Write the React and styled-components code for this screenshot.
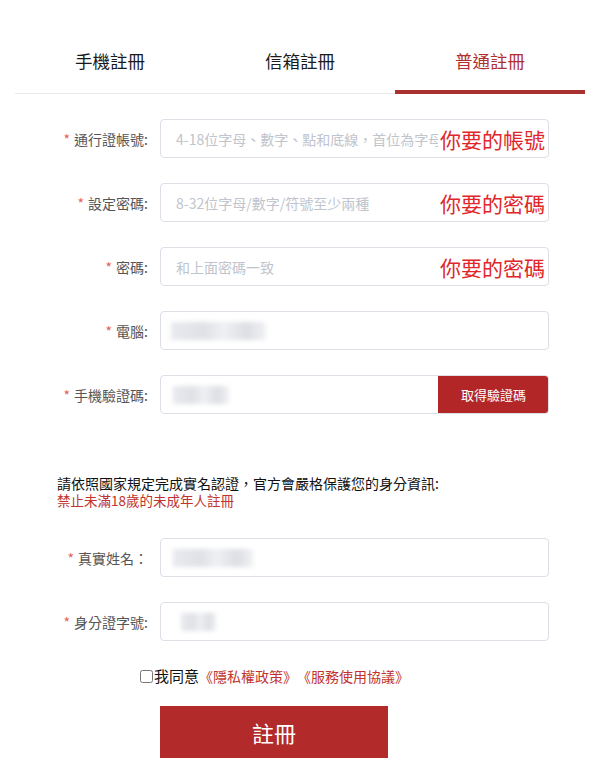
import React from "react";
import styled, { createGlobalStyle } from "styled-components";

const Global = createGlobalStyle`
  html, body { margin: 0; padding: 0; background: #fff; }
  body { font-family: "Noto Sans CJK TC", "Noto Sans", sans-serif; color: #333; }
  * { box-sizing: border-box; }
`;

const Page = styled.div`
  width: 597px;
  padding-bottom: 26px;
`;

const Tabs = styled.div`
  display: flex;
  margin: 0 12px 0 15px;
  border-bottom: 1px solid #e9e9e9;
`;

const Tab = styled.div`
  flex: 1;
  height: 94px;
  padding-top: 32px;
  padding-bottom: 1px;
  margin-bottom: -1px;
  display: flex;
  align-items: center;
  justify-content: center;
  font-size: 17.5px;
  line-height: 22px;
  color: ${(p) => (p.$active ? "#b0302f" : "#1a1a1a")};
  border-bottom: 4px solid ${(p) => (p.$active ? "#a93130" : "transparent")};
`;

const Form = styled.div`
  display: flex;
  flex-direction: column;
  gap: 25px;
  padding-top: 25px;
`;

const Row = styled.div`
  display: flex;
  align-items: center;
  gap: 12px;
`;

const Label = styled.label`
  width: 148px;
  text-align: right;
  font-size: 14px;
  line-height: 20px;
  color: #555;
  white-space: nowrap;
  &::before {
    content: "*";
    color: #e86060;
    margin-right: 4px;
  }
`;

const Field = styled.div`
  position: relative;
  width: 389px;
  height: 39px;
  border: 1px solid #dcdfe6;
  border-radius: 4px;
  display: flex;
  align-items: center;
  overflow: hidden;
`;

const Input = styled.input`
  flex: 1;
  min-width: 0;
  height: 100%;
  border: none;
  outline: none;
  padding: 0 15px;
  font-family: inherit;
  font-size: 14px;
  color: #606266;
  background: transparent;
  &::placeholder { color: #c0c4cc; }
`;

const Note = styled.span`
  position: absolute;
  right: 3px;
  top: 50%;
  transform: translateY(-50%);
  font-size: 21px;
  line-height: 28px;
  color: #e0262a;
  background: #fff;
  padding-left: 2px;
`;

const Blur = styled.span`
  position: absolute;
  left: ${(p) => p.$left}px;
  top: 10px;
  width: ${(p) => p.$w}px;
  height: 18px;
  background: linear-gradient(90deg, #e9eaee 0%, #dfe1e6 35%, #eef0f3 55%, #dcdee3 80%, #f1f2f4 100%);
  filter: blur(2px);
  pointer-events: none;
`;

const CodeButton = styled.button`
  width: 111px;
  height: 39px;
  margin: -1px -1px -1px 0;
  border: none;
  border-radius: 0 4px 4px 0;
  background: #b22628;
  color: #fff;
  font-family: inherit;
  font-size: 13px;
  cursor: pointer;
`;

const Notice = styled.div`
  display: flex;
  flex-direction: column;
  gap: 0;
  margin: 61px 0 4px 57px;
  font-size: 14px;
  color: #111;
`;

const Lead = styled.div`
  line-height: 17px;
`;

const Warn = styled.div`
  color: #c0332f;
  font-size: 13.5px;
  line-height: 17px;
`;

const Agree = styled.div`
  display: flex;
  align-items: center;
  padding-left: 140px;
  margin-top: 25px;
  font-size: 15px;
  line-height: 20px;
  color: #111;
`;

const Check = styled.input`
  width: 13px;
  height: 13px;
  margin: 0 1px 0 0;
`;

const Link = styled.a`
  color: #c0332f;
  font-size: 14px;
  text-decoration: none;
  cursor: pointer;
`;

const Submit = styled.button`
  display: block;
  margin: 20px 0 0 160px;
  width: 228px;
  height: 52px;
  border: none;
  background: #b22a29;
  color: #fff;
  font-family: inherit;
  font-size: 22px;
  cursor: pointer;
`;

const fields = [
  { label: "通行證帳號:", ph: "4-18位字母、數字、點和底線，首位為字母", note: "你要的帳號" },
  { label: "設定密碼:", ph: "8-32位字母/數字/符號至少兩種", note: "你要的密碼", type: "password" },
  { label: "密碼:", ph: "和上面密碼一致", note: "你要的密碼", type: "password" },
  { label: "電腦:", blur: [10, 95] },
  { label: "手機驗證碼:", blur: [12, 56], code: true },
];

const idFields = [
  { label: "真實姓名：", blur: [12, 80] },
  { label: "身分證字號:", blur: [20, 35] },
];

function FormRow({ f }) {
  return (
    <Row>
      <Label>{f.label}</Label>
      <Field>
        <Input type={f.type || "text"} placeholder={f.ph || ""} />
        {f.blur && <Blur $left={f.blur[0]} $w={f.blur[1]} />}
        {f.note && <Note>{f.note}</Note>}
        {f.code && <CodeButton>取得驗證碼</CodeButton>}
      </Field>
    </Row>
  );
}

export default function App() {
  return (
    <Page>
      <Global />
      <Tabs>
        <Tab>手機註冊</Tab>
        <Tab>信箱註冊</Tab>
        <Tab $active>普通註冊</Tab>
      </Tabs>
      <Form>
        {fields.map((f, i) => (
          <FormRow key={i} f={f} />
        ))}
      </Form>
      <Notice>
        <Lead>請依照國家規定完成實名認證，官方會嚴格保護您的身分資訊:</Lead>
        <Warn>禁止未滿18歲的未成年人註冊</Warn>
      </Notice>
      <Form>
        {idFields.map((f, i) => (
          <FormRow key={i} f={f} />
        ))}
      </Form>
      <Agree>
        <Check type="checkbox" />
        我同意
        <Link>《隱私權政策》</Link>
        <Link>《服務使用協議》</Link>
      </Agree>
      <Submit>註冊</Submit>
    </Page>
  );
}
